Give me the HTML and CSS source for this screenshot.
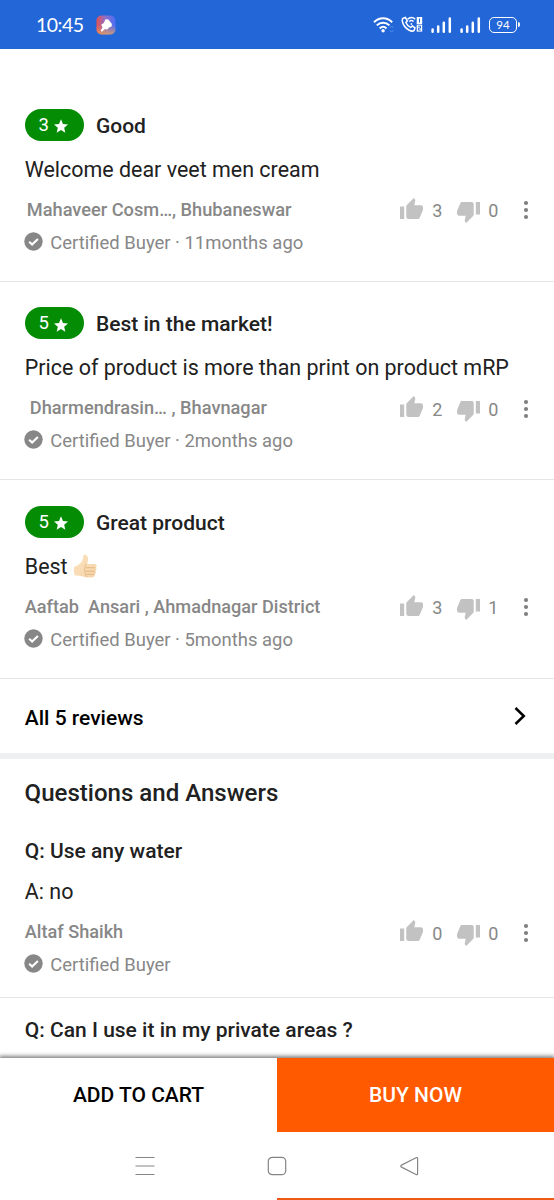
FILE: index.html
```html
<!DOCTYPE html>
<html lang="en">
<head>
<meta charset="utf-8">
<title>Product reviews</title>
<link rel="stylesheet" href="styles.css">
</head>
<body>
<svg class="defs" width="0" height="0">
  <defs>
    <symbol id="up" viewBox="1 1 22 20"><path d="M1 21h4V9H1v12zm22-11c0-1.1-.9-2-2-2h-6.31l.95-4.57.03-.32c0-.41-.17-.79-.44-1.06L14.17 1 7.59 7.59C7.22 7.95 7 8.45 7 9v10c0 1.1.9 2 2 2h9c.83 0 1.54-.5 1.84-1.22l3.02-7.05c.09-.23.14-.47.14-.73v-2z"/></symbol>
    <symbol id="down" viewBox="1 3 22 20"><path d="M15 3H6c-.83 0-1.54.5-1.84 1.22l-3.02 7.05c-.09.23-.14.47-.14.73v2c0 1.1.9 2 2 2h6.31l-.95 4.57-.03.32c0 .41.17.79.44 1.06L9.83 23l6.59-6.59c.36-.36.58-.86.58-1.41V5c0-1.1-.9-2-2-2zm4 0v12h4V3h-4z"/></symbol>
    <symbol id="dots" viewBox="0 0 6 20"><circle cx="3" cy="3" r="2.1"/><circle cx="3" cy="10" r="2.1"/><circle cx="3" cy="17" r="2.1"/></symbol>
    <symbol id="check" viewBox="0 0 19 19"><circle cx="9.5" cy="9.5" r="9.2"/><path d="M5.2 9.8l2.9 2.8 5.8-5.7" fill="none" stroke="#fff" stroke-width="2.1"/></symbol>
    <symbol id="star" viewBox="2 2 20 19"><path d="M12 17.27L18.18 21l-1.64-7.03L22 9.24l-7.19-.61L12 2 9.19 8.63 2 9.24l5.46 4.73L5.82 21z"/></symbol>
    <symbol id="signal" viewBox="0 0 21 16"><path d="M1.6 12.5v2.2M7.2 9.5v5.2M12.8 5.8v8.9M18.8 1.6v13.1" fill="none" stroke="#fff" stroke-width="2.5" stroke-linecap="round"/></symbol>
  </defs>
</svg>
<div class="screen">
  <header class="status">
    <span class="clock">10:45</span>
    <svg class="app" viewBox="0 0 20 20">
      <defs>
        <linearGradient id="g1" x1="0" y1=".3" x2="1" y2=".3"><stop offset="0" stop-color="#e8504f"/><stop offset=".45" stop-color="#9070c8"/><stop offset="1" stop-color="#4a6cf5"/></linearGradient>
        <linearGradient id="g2" x1=".5" y1=".5" x2=".5" y2="1"><stop offset="0" stop-color="#e8a060" stop-opacity="0"/><stop offset="1" stop-color="#eda84e" stop-opacity=".75"/></linearGradient>
      </defs>
      <rect x=".5" y=".5" width="19" height="19" rx="5" fill="url(#g1)"/>
      <rect x=".5" y=".5" width="19" height="19" rx="5" fill="url(#g2)"/>
      <path d="M9.4 4.2l3 .2 3.500 4.700-.3 2.300-2.600 1-1.700 2.200-2.400-.6-2.400 2.300c-1 .8-2.200-.3-1.500-1.300l1.600-2.600-1.400-2.700 2.600-1.700z" fill="#fff"/>
    </svg>
    <div class="tray">
      <svg class="wifi" viewBox="0 0 21 17"><g fill="none" stroke="#fff" stroke-width="2"><path d="M1 6.2C6.2.8 14 .8 19.2 6.2"/><path d="M3.8 9.4c3.6-3.6 9-3.6 12.6 0"/><path d="M6.7 12.4c2-1.9 4.8-1.9 6.8 0"/></g><circle cx="10.1" cy="14.7" r="1.7" fill="#fff"/><path d="M16.7 12l1.8-2 1.8 2M16.7 14.2l1.8 2 1.8-2" stroke="#5791ee" fill="none"/></svg>
      <svg class="call" viewBox="0 0 22 17"><path d="M2.2 2.2l2.2-.7 2 3.3-1.500 1.700c1 2.400 2.600 4 4.800 4.900l1.700-1.400 2.600 1.900-.8 2.300c-1 1.300-3.400.9-5.400-.2C4.600 12 2 8.600 1.400 5.500 1.100 4 1.200 2.800 2.200 2.200z" fill="none" stroke="#fff" stroke-width="1.5"/><path d="M6.600 3.300c2.300-2.300 5.400-2.300 7.600 0M8.300 5.500c1.400-1.300 2.900-1.300 4.200 0M9.600 8h1.600" fill="none" stroke="#fff" stroke-width="1.5"/><rect x="15.700" y="1" width="5.500" height="7" fill="#fff"/><rect x="15.700" y="8.600" width="5.500" height="7" fill="#fff"/><path d="M18.500 2.500v4M17.200 10.200h2.300v1.900h-2.100v2h2.300" fill="none" stroke="#2266d8"/></svg>
      <svg class="signal"><use href="#signal"/></svg>
      <svg class="signal"><use href="#signal"/></svg>
      <span class="battery">94</span>
    </div>
  </header>

  <main class="content">
    <article class="review">
      <div class="head"><span class="badge">3<svg><use href="#star"/></svg></span><h3>Good</h3></div>
      <p class="body">Welcome dear veet men cream</p>
      <div class="meta">
        <div class="who"><p class="name n1">Mahaveer Cosm…, Bhubaneswar</p><p class="cert"><svg><use href="#check"/></svg>Certified Buyer · 11months ago</p></div>
        <div class="votes"><svg class="up"><use href="#up"/></svg><span>3</span><svg class="down"><use href="#down"/></svg><span>0</span><svg class="dots"><use href="#dots"/></svg></div>
      </div>
    </article>
    <article class="review">
      <div class="head"><span class="badge">5<svg><use href="#star"/></svg></span><h3>Best in the market!</h3></div>
      <p class="body">Price of product is more than print on product mRP</p>
      <div class="meta">
        <div class="who"><p class="name n2">Dharmendrasin… , Bhavnagar</p><p class="cert"><svg><use href="#check"/></svg>Certified Buyer · 2months ago</p></div>
        <div class="votes"><svg class="up"><use href="#up"/></svg><span>2</span><svg class="down"><use href="#down"/></svg><span>0</span><svg class="dots"><use href="#dots"/></svg></div>
      </div>
    </article>
    <article class="review">
      <div class="head"><span class="badge">5<svg><use href="#star"/></svg></span><h3>Great product</h3></div>
      <p class="body">Best <svg class="emoji" viewBox="0 0 24 25"><defs><linearGradient id="skin" x1="0" y1="0" x2="1" y2="1"><stop offset="0" stop-color="#fce3c0"/><stop offset="1" stop-color="#f5d3a8"/></linearGradient></defs><path d="M1.300 12.500C4 12 6 10.700 7.700 8.800c1.700-1.800 2.300-3.500 2.400-6 .1-1.700 1-2.200 2.200-2 2.100.4 3 2.600 2.700 5.100l-.8 4h7.300c2.500 0 2.900 3.100.9 3.700 1.600.7 1.500 3-.2 3.500 1.100.8.900 2.800-.6 3.200.6 1.300-.2 2.800-1.900 2.900-4.300.4-7.800.2-10.700-.9-2.500-.9-4.500-1-6.800-.7C.6 19 .4 15 1.300 12.500z" fill="url(#skin)"/><path d="M13.800 10c-1.800.6-2.300 2-1.500 3.300-1.200 1-1.100 2.700 0 3.500-.9 1.200-.6 2.500.5 3.100-.5 1.500.1 2.700 1.500 3.200M12.800 13.700h9.500M12.800 17.200h9.300M13.200 20.400h8.200" fill="none" stroke="#dfb17b" stroke-width=".8"/></svg></p>
      <div class="meta">
        <div class="who"><p class="name n3">Aaftab  Ansari , Ahmadnagar District</p><p class="cert"><svg><use href="#check"/></svg>Certified Buyer · 5months ago</p></div>
        <div class="votes"><svg class="up"><use href="#up"/></svg><span>3</span><svg class="down"><use href="#down"/></svg><span>1</span><svg class="dots"><use href="#dots"/></svg></div>
      </div>
    </article>
    <div class="all"><span>All 5 reviews</span><svg viewBox="0 0 12 20"><path d="M1.500 2l8.300 8-8.300 8" fill="none" stroke="#000" stroke-width="2.5"/></svg></div>
    <section class="qa">
      <h2>Questions and Answers</h2>
      <article class="question">
        <h3>Q: Use any water</h3>
        <p class="body">A: no</p>
        <div class="meta">
          <div class="who"><p class="name">Altaf Shaikh</p><p class="cert"><svg><use href="#check"/></svg>Certified Buyer</p></div>
          <div class="votes"><svg class="up"><use href="#up"/></svg><span>0</span><svg class="down"><use href="#down"/></svg><span>0</span><svg class="dots"><use href="#dots"/></svg></div>
        </div>
      </article>
      <article class="question next"><h3>Q: Can I use it in my private areas ?</h3></article>
    </section>
  </main>

  <div class="actions"><button class="cart">ADD TO CART</button><button class="buy">BUY NOW</button></div>
  <nav class="nav">
    <svg viewBox="0 0 20 20"><path d="M.5 1.500h19M.5 10h19M.5 18.500h19"/></svg>
    <svg viewBox="0 0 20 20"><rect x="1.300" y="1.300" width="17.400" height="17.400" rx="4"/></svg>
    <svg viewBox="0 0 20 20"><path d="M18.600 2.500v15.200c0 .9-.8 1.200-1.600.8L2.500 11.100c-1-.5-1-1.500 0-2L17 1.700c.8-.4 1.600-.1 1.600.8z"/></svg>
  </nav>
  <div class="peek"></div>
</div>
</body>
</html>
```
FILE: styles.css
```css
* { box-sizing: border-box; }
body { margin: 0; background: #fff; font-family: Roboto, "Noto Sans", sans-serif; color: #212121; }
h2, h3, p { margin: 0; font-weight: 500; white-space: pre; }
svg { display: block; flex: none; }
.defs { position: absolute; }
.screen { width: 554px; height: 1200px; display: flex; flex-direction: column; overflow: hidden; }

.status { height: 49px; flex: none; background: #2266d8; color: #fff; display: flex; align-items: center; padding: 0 35px 0 36px; }
.clock { font: 19.5px/49px Lato, sans-serif; width: 60px; letter-spacing: -.5px; }
.app { width: 20px; height: 20px; }
.tray { margin-left: auto; display: flex; align-items: center; }
.wifi { width: 21px; height: 17px; margin-right: 7px; }
.call { width: 22px; height: 17px; margin-right: 8px; }
.signal { width: 21px; height: 16px; margin-right: 8px; }
.battery { position: relative; width: 28px; height: 16px; border: 1.5px solid #fff; border-radius: 5px; font: 11.5px/13px Lato, sans-serif; text-align: center; margin-right: 2px; }
.battery::after { content: ""; position: absolute; right: -4px; top: 4px; width: 2px; height: 5px; background: #fff; border-radius: 0 2px 2px 0; }

.content { height: 1009px; flex: none; padding-top: 34px; overflow: hidden; }
.review { height: 198.5px; padding: 25.7px 24.7px 0 24.8px; border-bottom: 1.5px solid #e6e6e6; }
.head { display: flex; align-items: center; height: 32px; gap: 12.2px; }
.badge { width: 59px; height: 32px; border-radius: 16px; background: #058c05; color: #fff; display: flex; align-items: center; justify-content: center; gap: 5px; padding-right: 2px; font-size: 18.5px; line-height: 32px; }
.badge svg { width: 14px; height: 14px; fill: #fff; margin-top: 3px; }
h3 { font-size: 21px; line-height: 28px; }
.head h3 { padding-top: 2px; }
.body { font-size: 21.45px; line-height: 28px; font-weight: 400; margin-top: 15px; }
.emoji { display: inline-block; width: 24px; height: 25px; vertical-align: -5px; }
.meta { display: flex; justify-content: space-between; margin-top: 13px; }
.name { font-size: 18.15px; line-height: 26px; color: #878787; }
.n1 { padding-left: 2px; font-size: 18.22px; }
.n2 { padding-left: 5px; font-size: 18.22px; }
.cert { display: flex; align-items: center; gap: 7px; font-size: 18.45px; font-weight: 400; line-height: 26px; color: #878787; margin-top: 7px; }
.cert svg { width: 19px; height: 19px; fill: #878787; margin: -3px 0 0 -.5px; }
.votes { display: flex; height: 28px; align-items: center; color: #878787; font-size: 18px; }
.votes svg { fill: #c2c2c2; }
.votes span { width: 10px; }
.up { width: 23px; height: 21px; margin: -5px 9px 0 0; }
.down { width: 23px; height: 21px; margin: 4px 8px 0 15px; }
.votes .dots { width: 6px; height: 20px; fill: #808080; margin: -1px 0 0 25px; }

.all { height: 74.5px; display: flex; align-items: center; justify-content: space-between; padding: 5px 28px 0 24.8px; color: #000; font-size: 21px; font-weight: 500; }
.all svg { width: 12px; height: 20px; margin-top: -5px; }
.qa { border-top: 6px solid #eff0f1; }
.qa h2 { font-size: 24.05px; line-height: 30px; padding: 19px 24.6px 0; }
.question { height: 190px; padding: 29px 24.7px 0 24.8px; border-bottom: 1.5px solid #e6e6e6; }
.question .body { margin-top: 13px; }
.question .meta { margin-top: 13px; }
.question.next { padding-top: 18px; border: 0; }

.actions { position: relative; height: 74px; flex: none; display: flex; box-shadow: 0 -1px 4px 1px rgba(0,0,0,.5); clip-path: inset(-8px 0 0 0); }
.actions button { flex: 1; border: 0; font: 500 21px/28px Roboto, sans-serif; padding: 0; }
.cart { background: #fff; color: #000; }
.buy { background: #ff5a00; color: #fff; }
.nav { height: 66px; flex: none; display: flex; justify-content: center; gap: 112px; align-items: center; padding-top: 2px; }
.nav svg { width: 20px; height: 20px; fill: none; stroke: #858585; stroke-width: 1.2; }
.peek { height: 2px; flex: none; margin-left: 277px; background: #ee5a15; }
```
